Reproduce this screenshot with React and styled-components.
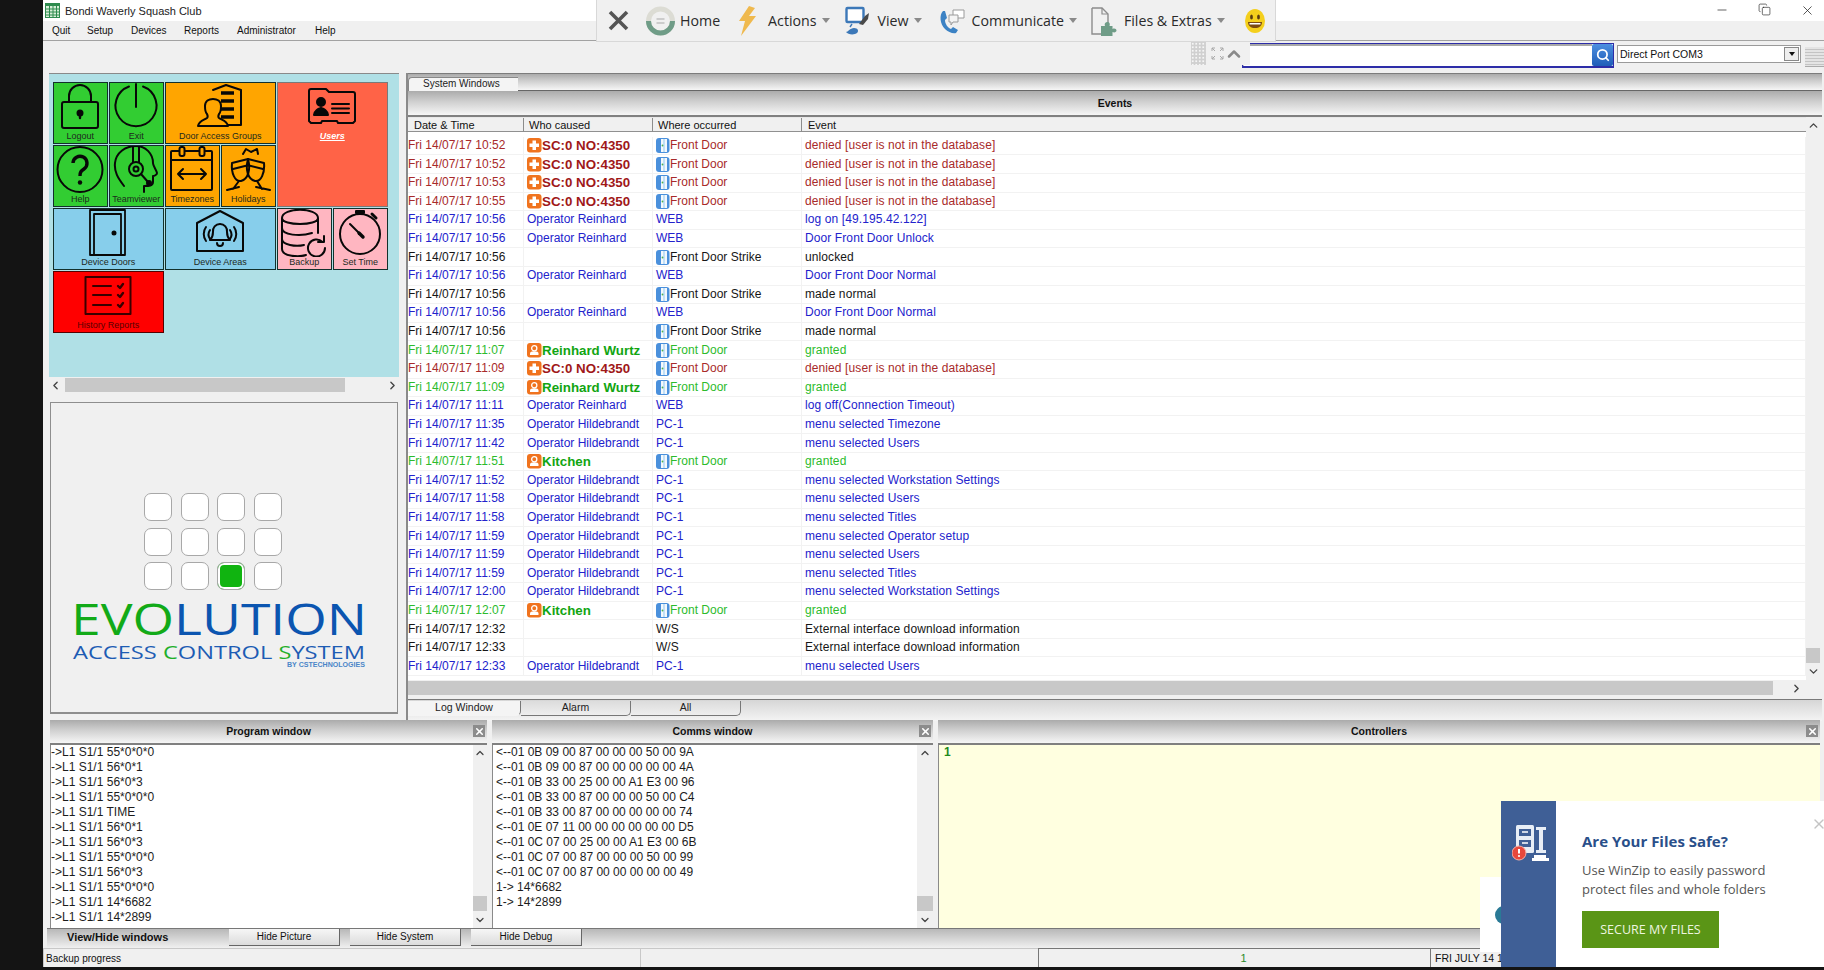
import React from "react";
import styled, { createGlobalStyle } from "styled-components";
import { ChevronUp, ChevronDown, ChevronLeft, ChevronRight, Search, Minus, Copy, X } from "lucide-react";

const barGradient = "linear-gradient(#ababab, #d0d0d0 45%, #f6f6f6)";

const rows = [
  ["denied", "Fri 14/07/17 10:52", "card", "SC:0 NO:4350", "Front Door", "denied [user is not in the database]"],
  ["denied", "Fri 14/07/17 10:52", "card", "SC:0 NO:4350", "Front Door", "denied [user is not in the database]"],
  ["denied", "Fri 14/07/17 10:53", "card", "SC:0 NO:4350", "Front Door", "denied [user is not in the database]"],
  ["denied", "Fri 14/07/17 10:55", "card", "SC:0 NO:4350", "Front Door", "denied [user is not in the database]"],
  ["op", "Fri 14/07/17 10:56", "", "Operator Reinhard", "WEB", "log on [49.195.42.122]"],
  ["op", "Fri 14/07/17 10:56", "", "Operator Reinhard", "WEB", "Door Front Door Unlock"],
  ["plain", "Fri 14/07/17 10:56", "", "", "Front Door Strike", "unlocked"],
  ["op", "Fri 14/07/17 10:56", "", "Operator Reinhard", "WEB", "Door Front Door Normal"],
  ["plain", "Fri 14/07/17 10:56", "", "", "Front Door Strike", "made normal"],
  ["op", "Fri 14/07/17 10:56", "", "Operator Reinhard", "WEB", "Door Front Door Normal"],
  ["plain", "Fri 14/07/17 10:56", "", "", "Front Door Strike", "made normal"],
  ["granted", "Fri 14/07/17 11:07", "user", "Reinhard Wurtz", "Front Door", "granted"],
  ["denied", "Fri 14/07/17 11:09", "card", "SC:0 NO:4350", "Front Door", "denied [user is not in the database]"],
  ["granted", "Fri 14/07/17 11:09", "user", "Reinhard Wurtz", "Front Door", "granted"],
  ["op", "Fri 14/07/17 11:11", "", "Operator Reinhard", "WEB", "log off(Connection Timeout)"],
  ["op", "Fri 14/07/17 11:35", "", "Operator Hildebrandt", "PC-1", "menu selected Timezone"],
  ["op", "Fri 14/07/17 11:42", "", "Operator Hildebrandt", "PC-1", "menu selected Users"],
  ["granted", "Fri 14/07/17 11:51", "user", "Kitchen", "Front Door", "granted"],
  ["op", "Fri 14/07/17 11:52", "", "Operator Hildebrandt", "PC-1", "menu selected Workstation Settings"],
  ["op", "Fri 14/07/17 11:58", "", "Operator Hildebrandt", "PC-1", "menu selected Users"],
  ["op", "Fri 14/07/17 11:58", "", "Operator Hildebrandt", "PC-1", "menu selected Titles"],
  ["op", "Fri 14/07/17 11:59", "", "Operator Hildebrandt", "PC-1", "menu selected Operator setup"],
  ["op", "Fri 14/07/17 11:59", "", "Operator Hildebrandt", "PC-1", "menu selected Users"],
  ["op", "Fri 14/07/17 11:59", "", "Operator Hildebrandt", "PC-1", "menu selected Titles"],
  ["op", "Fri 14/07/17 12:00", "", "Operator Hildebrandt", "PC-1", "menu selected Workstation Settings"],
  ["granted", "Fri 14/07/17 12:07", "user", "Kitchen", "Front Door", "granted"],
  ["plain", "Fri 14/07/17 12:32", "", "", "W/S", "External interface download information"],
  ["plain", "Fri 14/07/17 12:33", "", "", "W/S", "External interface download information"],
  ["op", "Fri 14/07/17 12:33", "", "Operator Hildebrandt", "PC-1", "menu selected Users"],
];

const tones = {
  denied: "#a82a2a",
  op: "#2222cc",
  plain: "#161616",
  granted: "#2cbb2c",
};
const strongTones = { denied: "#a01818", granted: "#12a512" };

const programLines = [
  "->L1 S1/1 55*0*0*0", "->L1 S1/1 56*0*1", "->L1 S1/1 56*0*3", "->L1 S1/1 55*0*0*0",
  "->L1 S1/1 TIME", "->L1 S1/1 56*0*1", "->L1 S1/1 56*0*3", "->L1 S1/1 55*0*0*0",
  "->L1 S1/1 56*0*3", "->L1 S1/1 55*0*0*0", "->L1 S1/1 14*6682", "->L1 S1/1 14*2899",
];

const commsLines = [
  "<--01 0B 09 00 87 00 00 00 50 00 9A", "<--01 0B 09 00 87 00 00 00 00 00 4A",
  "<--01 0B 33 00 25 00 00 A1 E3 00 96", "<--01 0B 33 00 87 00 00 00 50 00 C4",
  "<--01 0B 33 00 87 00 00 00 00 00 74", "<--01 0E 07 11 00 00 00 00 00 00 D5",
  "<--01 0C 07 00 25 00 00 A1 E3 00 6B", "<--01 0C 07 00 87 00 00 00 50 00 99",
  "<--01 0C 07 00 87 00 00 00 00 00 49", "1-> 14*6682", "1-> 14*2899",
];

const GlobalStyle = createGlobalStyle`
  html, body {
    margin: 0;
    height: 970px;
    overflow: hidden;
    background: #141414;
    font-family: "Liberation Sans", Arial, sans-serif;
  }
`;

const Page = styled.div`
  position: relative;
  width: 1824px;
  height: 970px;
  overflow: hidden;
`;

const AppWindow = styled.div`
  display: flex;
  flex-direction: column;
  margin-left: 43px;
  width: 1781px;
  height: 967px;
  background: #f0f0f0;
`;

const TitleBar = styled.div`
  display: flex;
  align-items: center;
  height: 21px;
  background: #fff;
  color: #222;
  font-size: 11px;
  padding-left: 2px;
  gap: 5px;
`;

const WindowButtons = styled.div`
  display: flex;
  margin-left: auto;
  margin-right: 9px;
  gap: 29px;
  color: #222;
`;

const MenuBar = styled.div`
  display: flex;
  align-items: center;
  height: 20px;
  padding-left: 9px;
  box-sizing: border-box;
  border-bottom: 1px solid #a2a2a2;
  font-size: 10px;
  color: #111;
`;

const MenuItem = styled.span`
  width: ${(p) => p.$w}px;
`;

const ToolRow = styled.div`
  display: flex;
  justify-content: flex-end;
  align-items: flex-start;
  height: 32px;
  box-sizing: border-box;
  padding-top: 2px;
`;

const SearchBox = styled.div`
  display: flex;
  width: 372px;
  height: 25px;
  box-sizing: border-box;
  border: 1px solid #2d2da8;
  border-bottom-width: 2px;
  background: #fff;
`;

const SearchField = styled.div`
  flex: 1;
  border-top: 2px solid #a8a8a8;
  border-left: 1px solid #c8c8c8;
`;

const SearchButton = styled.div`
  display: flex;
  align-items: center;
  justify-content: center;
  width: 21px;
  background: linear-gradient(#4d8fe0, #1f5db8);
  border-radius: 2px;
  color: #fff;
`;

const Combo = styled.div`
  display: flex;
  align-items: center;
  justify-content: space-between;
  width: 184px;
  height: 18px;
  box-sizing: border-box;
  margin: 2px 0 0 3px;
  padding: 0 1px 0 2px;
  background: #fff;
  border: 1px solid #9a9a9a;
  font-size: 10.5px;
  color: #111;
`;

const ComboArrow = styled.span`
  display: flex;
  align-items: center;
  justify-content: center;
  width: 15px;
  height: 14px;
  background: #eee;
  border: 1px solid #888;
  box-sizing: border-box;
  &::after {
    content: "";
    border-left: 3px solid transparent;
    border-right: 3px solid transparent;
    border-top: 4px solid #111;
  }
`;

const DocButton = styled.div`
  width: 19px;
  height: 19px;
  margin: 4px 0 0 4px;
  background: repeating-linear-gradient(#e4e4e4 0 2px, #c4c4c4 2px 3px);
  border-bottom: 1px solid #aaa;
`;

const Upper = styled.div`
  display: flex;
  height: 647px;
`;

const LeftColumn = styled.div`
  display: flex;
  flex-direction: column;
  width: 363px;
  flex: none;
  padding-left: 6px;
  box-sizing: border-box;
`;

const TilePanel = styled.div`
  height: 304px;
  width: 350px;
  box-sizing: border-box;
  padding: 8px 0 0 4px;
  background: #b0e0e6;
  border-top: 1px solid #8a8a8a;
`;

const TileGrid = styled.div`
  display: grid;
  grid-template-columns: repeat(6, 54.5px);
  grid-auto-rows: 61.5px;
  gap: 1.5px;
`;

const tileColors = {
  green: "#32cd32",
  orange: "#ffa500",
  tomato: "#ff6347",
  sky: "#87ceeb",
  pink: "#ffb6c1",
  red: "#ff0000",
};

const Tile = styled.div`
  display: flex;
  flex-direction: column;
  align-items: center;
  grid-column: span ${(p) => p.$cols || 1};
  grid-row: span ${(p) => p.$rows || 1};
  box-sizing: border-box;
  overflow: hidden;
  background: ${(p) => tileColors[p.$color]};
  border: 1px solid ${(p) => (p.$color === "tomato" ? "#7a7a7a" : p.$color === "red" ? "#500" : "#12302c")};
  svg {
    flex: none;
    color: ${(p) => (p.$color === "red" ? "#3a0000" : "#080808")};
  }
`;

const TileLabel = styled.span`
  font-size: 9px;
  line-height: 11px;
  white-space: nowrap;
  color: ${(p) => (p.$color === "red" ? "#5a0000" : "#1d2a1d")};
`;

const UsersLabel = styled(TileLabel)`
  font-weight: bold;
  font-style: italic;
  text-decoration: underline;
  color: #fff;
`;

const HScroll = styled.div`
  display: flex;
  align-items: center;
  justify-content: space-between;
  width: ${(p) => p.$w}px;
  height: 14px;
  flex: none;
  background: #f0f0f0;
  color: #444;
  margin: 1px 0 0;
`;

const HTrack = styled.div`
  flex: 1;
  height: 14px;
  margin: 0 ${(p) => p.$gap}px 0 ${(p) => p.$start || 0}px;
  background: #c8c8c8;
`;

const PicturePanel = styled.div`
  display: flex;
  flex-direction: column;
  align-items: center;
  width: 348px;
  height: 312px;
  box-sizing: border-box;
  margin: 10px 0 0 1px;
  padding-top: 90px;
  border: 1px solid #8e8e8e;
  border-bottom-width: 2px;
`;

const KeyGrid = styled.div`
  display: grid;
  grid-template-columns: repeat(4, 28px);
  grid-auto-rows: 28px;
  gap: 6.5px 8.5px;
  margin-right: 22px;
`;

const Key = styled.div`
  box-sizing: border-box;
  border: 1.5px solid #a8a8a8;
  border-radius: 7px;
  background: ${(p) => (p.$on ? "#10b410" : "#fff")};
  box-shadow: ${(p) => (p.$on ? "inset 0 0 0 2px #fff" : "none")};
`;

const LogoSvg = styled.svg`
  display: block;
  margin: -5px 0 0 -10px;
`;

const MainPanel = styled.div`
  display: flex;
  flex-direction: column;
  width: 1416px;
  border-left: 2px solid #8a8a8a;
  box-sizing: border-box;
`;

const TabStrip = styled.div`
  display: flex;
  height: 18px;
  flex: none;
  padding-top: 3px;
  box-sizing: border-box;
  background: ${barGradient};
  border-top: 1px solid #7c7c7c;
  border-bottom: 1px solid #666;
`;

const TopTab = styled.div`
  width: 110px;
  height: 15px;
  box-sizing: border-box;
  padding-left: 14px;
  background: #f4f4f4;
  border-left: 1px solid #888;
  border-top: 1px solid #888;
  border-top-left-radius: 4px;
  font-size: 10px;
  line-height: 12px;
  color: #222;
`;

const SectionHeader = styled.div`
  position: relative;
  display: flex;
  align-items: center;
  justify-content: center;
  height: ${(p) => p.$h}px;
  flex: none;
  box-sizing: border-box;
  padding-bottom: ${(p) => p.$lift || 0}px;
  background: ${barGradient};
  border-bottom: 2px solid #808080;
  font-size: 10.5px;
  font-weight: bold;
  color: #111;
`;

const CloseBox = styled.span`
  position: absolute;
  right: 2px;
  top: 5px;
  display: flex;
  align-items: center;
  justify-content: center;
  width: 12px;
  height: 12px;
  background: #8c8c8c;
  color: #fff;
`;

const TableArea = styled.div`
  display: flex;
  height: 563px;
  flex: none;
  background: #fff;
  margin-right: 2px;
`;

const Table = styled.div`
  flex: 1;
  min-width: 0;
`;

const gridColumns = "116px 129px 149px 1fr";

const ColumnHeader = styled.div`
  display: grid;
  grid-template-columns: ${gridColumns};
  height: 15px;
  background: #f0f0f0;
  border-bottom: 1px solid #909090;
  border-top: 1px solid #e8e8e8;
  box-sizing: border-box;
  font-size: 11px;
  line-height: 14px;
  color: #111;
`;

const HeaderCell = styled.div`
  padding-left: ${(p) => p.$pad}px;
  border-right: 1px solid #8c8c8c;
  &:last-child {
    border-right: 0;
  }
`;

const RowList = styled.div`
  padding-top: 4.8px;
`;

const Row = styled.div`
  display: grid;
  grid-template-columns: ${gridColumns};
  height: 18.6px;
  box-sizing: border-box;
  border-bottom: 1px solid #f2f2f2;
  font-size: 12px;
  line-height: 17px;
  white-space: nowrap;
  color: ${(p) => tones[p.$tone]};
`;

const Cell = styled.div`
  display: flex;
  align-items: center;
  padding-left: ${(p) => p.$pad || 0}px;
  border-right: 1px solid #f2f2f2;
  overflow: hidden;
`;

const EventCell = styled(Cell)`
  letter-spacing: 0.1px;
`;

const WhoName = styled.span`
  font-size: 13.33px;
  font-weight: bold;
  color: ${(p) => strongTones[p.$tone]};
`;

const VScroll = styled.div`
  display: flex;
  flex-direction: column;
  align-items: center;
  width: ${(p) => p.$w}px;
  flex: none;
  background: #f0f0f0;
  color: #444;
  padding: 2px 0;
  box-sizing: border-box;
`;

const VTrack = styled.div`
  flex: 1;
  display: flex;
  align-items: flex-end;
  width: 100%;
  padding-bottom: ${(p) => p.$bottom}px;
`;

const VThumb = styled.div`
  width: 100%;
  height: 15px;
  background: #c8c8c8;
`;

const BottomTabs = styled.div`
  display: flex;
  height: 22px;
  flex: none;
  box-sizing: border-box;
  margin-top: 4px;
  padding-top: 1px;
  border-top: 1px solid #7a7a7a;
  background: linear-gradient(#d6d6d6, #f4f4f4);
`;

const LogTab = styled.div`
  width: ${(p) => p.$w}px;
  height: 15px;
  box-sizing: border-box;
  text-align: center;
  font-size: 10.5px;
  line-height: 13px;
  color: #222;
  background: ${(p) => (p.$active ? "#f4f4f4" : "linear-gradient(#dcdcdc, #eee)")};
  border-bottom: 1px solid ${(p) => (p.$active ? "#f4f4f4" : "#777")};
  border-right: 1px solid #777;
  border-bottom-right-radius: 5px;
`;

const Lower = styled.div`
  display: flex;
  height: 208px;
  flex: none;
  padding-left: 7px;
  gap: 5px;
`;

const DebugPanel = styled.div`
  display: flex;
  flex-direction: column;
  width: ${(p) => p.$w}px;
  flex: none;
`;

const DebugBody = styled.div`
  display: flex;
  height: 183px;
  background: ${(p) => p.$bg || "#fff"};
  border-left: 1px solid #8a8a8a;
`;

const LogLines = styled.div`
  flex: 1;
  padding-left: ${(p) => p.$pad}px;
  font-size: 12px;
  line-height: 15px;
  color: #1c1c1c;
  white-space: nowrap;
`;

const ControllerText = styled.div`
  padding-left: 5px;
  font-size: 12px;
  font-weight: bold;
  line-height: 14px;
  color: #1d8a1d;
`;

const ViewBar = styled.div`
  display: flex;
  align-items: flex-start;
  gap: 10px;
  height: 20px;
  flex: none;
  margin-left: 4px;
  background: linear-gradient(#b8b8b8, #f0f0f0);
  border-top: 1px solid #777;
  box-sizing: border-box;
`;

const ViewLabel = styled.div`
  width: 172px;
  padding-left: 20px;
  box-sizing: border-box;
  font-size: 11px;
  font-weight: bold;
  line-height: 16px;
  color: #111;
`;

const ViewButton = styled.div`
  width: 111px;
  height: 17px;
  box-sizing: border-box;
  text-align: center;
  font-size: 10px;
  line-height: 15px;
  color: #111;
  background: linear-gradient(#f6f6f6, #dcdcdc);
  border-right: 1px solid #666;
  border-bottom: 1px solid #666;
`;

const StatusBar = styled.div`
  display: flex;
  height: 19px;
  flex: none;
  font-size: 10px;
  color: #111;
`;

const StatusCell = styled.div`
  width: ${(p) => p.$w}px;
  flex: none;
  box-sizing: border-box;
  padding-left: ${(p) => p.$pad || 0}px;
  line-height: 19px;
  font-size: ${(p) => p.$size || 10}px;
  text-align: ${(p) => (p.$center ? "center" : "left")};
  color: ${(p) => p.$color || "#111"};
  border-left: 1px solid ${(p) => (p.$sunken ? "#777" : "#c8c8c8")};
  border-top: 1px solid ${(p) => (p.$sunken ? "#777" : "#c8c8c8")};
  white-space: nowrap;
  overflow: hidden;
`;

const RemoteBar = styled.div`
  position: absolute;
  left: 596px;
  top: 0;
  display: flex;
  align-items: center;
  width: 680px;
  height: 42px;
  box-sizing: border-box;
  padding-left: 11px;
  background: #f0f0f0;
  border: 1px solid #d8d8d8;
  border-top: 0;
  font-family: "Open Sans", sans-serif;
  font-size: 14.2px;
  color: #2a2a2a;
  svg {
    flex: none;
  }
`;

const RemoteItem = styled.div`
  display: flex;
  align-items: center;
  flex: none;
  gap: ${(p) => p.$gap}px;
  margin-left: ${(p) => p.$left}px;
  white-space: nowrap;
`;

const RemoteLabel = styled.span`
  display: flex;
  align-items: center;
  gap: 5px;
`;

const Caret = styled.span`
  border-left: 4px solid transparent;
  border-right: 4px solid transparent;
  border-top: 5px solid #8a8a8a;
`;

const Handle = styled.div`
  position: absolute;
  left: 1191px;
  top: 42px;
  display: flex;
  align-items: center;
  width: 59px;
  height: 23px;
  background: #f0f0f0;
`;

const Grip = styled.div`
  width: 15px;
  height: 100%;
  margin-right: 5px;
  background:
    radial-gradient(circle, #f6f6f6 1px, transparent 1.2px) 0 0 / 3.5px 3.5px,
    #d0d0d0;
`;

const Promo = styled.div`
  position: absolute;
  left: 1501px;
  top: 801px;
  display: flex;
  width: 323px;
  height: 166px;
  background: #fff;
`;

const PromoSide = styled.div`
  width: 55px;
  flex: none;
  box-sizing: border-box;
  padding: 22px 0 0 11px;
  background: #3f5f96;
`;

const PromoBody = styled.div`
  position: relative;
  flex: 1;
  padding: 30px 0 0 26px;
`;

const PromoClose = styled.span`
  position: absolute;
  right: -3px;
  top: 15px;
  color: #c4c4c4;
`;

const PromoTitle = styled.div`
  font-family: "Open Sans", sans-serif;
  font-size: 15px;
  font-weight: 700;
  line-height: 20px;
  color: #2a4f8a;
`;

const PromoText = styled.div`
  margin-top: 10px;
  font-family: "Open Sans", sans-serif;
  font-size: 13px;
  line-height: 19px;
  color: #555;
`;

const PromoButton = styled.div`
  width: 137px;
  height: 37px;
  margin-top: 12px;
  text-align: center;
  font-family: "Open Sans", sans-serif;
  font-size: 12.5px;
  line-height: 37px;
  color: #eef6e0;
  background: #5a9516;
`;

const PeekCard = styled.div`
  position: absolute;
  left: 1480px;
  top: 877px;
  display: flex;
  align-items: center;
  width: 21px;
  height: 75px;
  padding-left: 15px;
  box-sizing: border-box;
  overflow: hidden;
  background: #fff;
`;

const PeekDot = styled.div`
  width: 18px;
  height: 18px;
  flex: none;
  border-radius: 50%;
  background: #2a7a96;
`;

const Ic = ({ children, sw = 2 }) => (
  <svg width={48} height={48} viewBox="0 0 48 48" fill="none" stroke="currentColor" strokeWidth={sw} strokeLinecap="round" strokeLinejoin="round">
    {children}
  </svg>
);

const tileIcons = {
  lock: (
    <Ic>
      <rect x="6" y="19" width="36" height="26" rx="2" />
      <path d="M13 19v-6a11 11 0 0 1 22 0v6" />
      <circle cx="24" cy="30" r="2.5" fill="currentColor" />
      <path d="M24 30v5" strokeWidth="2.4" />
    </Ic>
  ),
  power: (
    <Ic>
      <path d="M17 3.5A20.5 20.5 0 1 0 31 3.5" />
      <path d="M24 1v23" />
    </Ic>
  ),
  groups: (
    <Ic>
      <path d="M17 7l13-5 15 5v35H24" />
      <path d="M25 10h13M25 18h13M25 26h13M25 34h13" strokeWidth="3.6" strokeLinecap="butt" />
      <path d="M2 43c1-5 6-6 9-8 1-1 1-2 0-4-2-2-2-6-2-8 0-5 4-7 8-7s8 2 8 7c0 2 0 6-2 8-1 2-1 3 0 4 3 2 8 3 9 8z" fill="#ffa500" />
    </Ic>
  ),
  card: (
    <Ic>
      <path d="M1 8a2 2 0 0 1 2-2h15l3 3h24a2 2 0 0 1 2 2v27l-2 2H30l-1-2H14l-1 2H3l-2-2z" />
      <circle cx="13" cy="19" r="4" fill="currentColor" />
      <path d="M6 32c1-5 4-6 7-7 3 1 6 2 7 7z" fill="currentColor" />
      <path d="M24 21h17M24 25.5h17M24 30h17" />
    </Ic>
  ),
  help: (
    <Ic>
      <circle cx="24" cy="23.5" r="22.5" />
      <path d="M17 17a7 7 0 1 1 11 6c-3 2-4 3-4 7" strokeWidth="3.4" strokeLinecap="butt" />
      <circle cx="24" cy="36.5" r="2.2" fill="currentColor" stroke="none" />
    </Ic>
  ),
  agent: (
    <Ic>
      <path d="M12 40C6 32 2 26 3 17 4 7 13 0 24 0c10 0 17 8 17 17 0 3 4 8 4 10s-3 3-4 3v6c0 4-4 4-9 4v6" />
      <path d="M21 0v16M27 0v16" />
      <circle cx="24" cy="23" r="7" />
      <circle cx="24" cy="23" r="2.5" />
      <path d="M29 28l7 8" />
      <circle cx="37" cy="37" r="2" fill="currentColor" />
    </Ic>
  ),
  calendar: (
    <Ic>
      <rect x="3" y="5" width="41" height="39" rx="1" />
      <path d="M3 14h41" />
      <rect x="11.5" y="1" width="5" height="9" rx="2" fill="#ffa500" />
      <rect x="31.5" y="1" width="5" height="9" rx="2" fill="#ffa500" />
      <path d="M10 28h28M15 23l-5 5 5 5M33 23l5 5-5 5" />
    </Ic>
  ),
  glasses: (
    <Ic>
      <path d="M8 17l16-4c3 11 0 20-7 22-6 1-10-8-9-18z" />
      <path d="M24 13l16 4c1 10-3 19-9 18-7-2-10-11-7-22z" />
      <path d="M9 23l16-4M23 19l16 4" />
      <path d="M15 35l-6 8M3 44l12-3M33 35l5 8M32 41l14 3" />
      <path d="M19 8l3-5 5 3 6-3 1 5" />
    </Ic>
  ),
  door: (
    <Ic sw={1.8}>
      <path d="M6 46V1h35v45zM10 46V5h27v41" />
      <circle cx="30" cy="24" r="1.6" fill="currentColor" />
    </Ic>
  ),
  area: (
    <Ic>
      <path d="M1 42V14L24 2l23 12v28z" />
      <path d="M24 15a7 7 0 0 0-7 8c0 4-1 6-3 8h20c-2-2-3-4-3-8a7 7 0 0 0-7-8z" />
      <path d="M21 34a3 3 0 0 0 6 0" />
      <path d="M10 18c-3 4-3 10 0 14M14 21c-2 3-2 6 0 9M38 18c3 4 3 10 0 14M34 21c2 3 2 6 0 9" />
    </Ic>
  ),
  database: (
    <Ic>
      <path d="M2 9c0-11 36-11 36 0v15M2 9c0 8 36 8 36 0M2 9v31c0 8 18 8 24 6M2 19c0 7 18 9 30 5M2 30c0 6 14 8 22 6" />
      <path d="M45 39a8.5 8.5 0 1 1-2.5-6" />
      <path d="M44 27v6h-6" />
    </Ic>
  ),
  stopwatch: (
    <Ic>
      <circle cx="24" cy="25" r="20" />
      <path d="M20 2h8v2h-8z" fill="currentColor" />
      <path d="M36 5l4 4" strokeWidth="3" />
      <path d="M14 15l13 13" />
      <path d="M23 24l4 4" strokeWidth="3.4" />
    </Ic>
  ),
  checklist: (
    <Ic>
      <rect x="1.5" y="5" width="45" height="37" />
      <path d="M9 14h18M9 23h18M9 33h18" />
      <path d="M34 14l2 2 3-4M34 23l2 2 3-4M34 33l2 2 3-4" strokeWidth="2.4" />
    </Ic>
  ),
};

const tiles = [
  { icon: "lock", label: "Logout", color: "green" },
  { icon: "power", label: "Exit", color: "green" },
  { icon: "groups", label: "Door Access Groups", color: "orange", cols: 2 },
  { icon: "card", label: "Users", color: "tomato", cols: 2, rows: 2 },
  { icon: "help", label: "Help", color: "green" },
  { icon: "agent", label: "Teamviewer", color: "green" },
  { icon: "calendar", label: "Timezones", color: "orange" },
  { icon: "glasses", label: "Holidays", color: "orange" },
  { icon: "door", label: "Device Doors", color: "sky", cols: 2 },
  { icon: "area", label: "Device Areas", color: "sky", cols: 2 },
  { icon: "database", label: "Backup", color: "pink" },
  { icon: "stopwatch", label: "Set Time", color: "pink" },
  { icon: "checklist", label: "History Reports", color: "red", cols: 2 },
];

const AppIcon = () => (
  <svg width="15" height="15" viewBox="0 0 15 15">
    <rect width="15" height="15" fill="#2e8b4e" />
    <path d="M1 3h13v11H1z" fill="#d8efd8" />
    <path d="M1 6h13M1 9h13M1 12h13M4.5 3v11M8 3v11M11.5 3v11" stroke="#2e8b4e" strokeWidth="1" />
  </svg>
);

const CardBadge = () => (
  <svg width="15" height="15" viewBox="0 0 15 15" style={{ flex: "none" }}>
    <rect width="14.5" height="14.5" rx="3" fill="#f0731e" />
    <path d="M5.5 2.5h3.5v3h3v3.5h-3v3H5.5v-3h-3V5.5h3z" fill="#fff" />
  </svg>
);

const UserBadge = () => (
  <svg width="15" height="15" viewBox="0 0 15 15" style={{ flex: "none" }}>
    <rect width="14.5" height="14.5" rx="3" fill="#f0731e" />
    <circle cx="7.25" cy="5.3" r="2.6" fill="none" stroke="#fff" strokeWidth="1.3" />
    <path d="M3 12v-1.5c0-1.5 1.5-2.3 4.25-2.3s4.25.8 4.25 2.3V12z" fill="#fff" />
  </svg>
);

const DoorBadge = () => (
  <svg width="14" height="15" viewBox="0 0 14 15" style={{ flex: "none" }}>
    <rect width="13.5" height="15" rx="3" fill="#4a90dc" />
    <rect x="5" y="1" width="6" height="13" fill="#f4f8fc" />
    <path d="M8 1v13" stroke="#8fc7f0" />
    <circle cx="6.5" cy="7.5" r="0.9" fill="#4fb04f" />
  </svg>
);

const HomeIcon = () => (
  <svg width="29" height="30" viewBox="0 0 29 30">
    <circle cx="14.5" cy="15" r="12" fill="none" stroke="#dcdcd4" strokeWidth="5" />
    <path d="M2.5 15a12 12 0 0 0 24 0" fill="none" stroke="#6f9c87" strokeWidth="5" />
    <path d="M10.5 13h8M10.5 17h8" stroke="#c0c0c0" strokeWidth="1.4" />
  </svg>
);

const BoltIcon = () => (
  <svg width="19" height="30" viewBox="0 0 19 30">
    <path d="M11 0L1 15h6L3 30 18 10h-7l6-8z" fill="#efb94e" />
  </svg>
);

const ViewIcon = () => (
  <svg width="25" height="30" viewBox="0 0 25 30">
    <rect x="1.5" y="2" width="17" height="14" rx="1" fill="#fff" stroke="#3c78b8" strokeWidth="2.4" />
    <path d="M7 18l-2 3" stroke="#3c78b8" strokeWidth="1.4" />
    <path d="M1 26c2 0 4-4 8-4s5 3 3 5-9 2-11-1z" fill="#3c78b8" />
    <path d="M14 18l6-8 4-3-1 6-5 6z" fill="#4a4a4a" />
  </svg>
);

const CommIcon = () => (
  <svg width="28" height="30" viewBox="0 0 28 30">
    <path d="M5 5C1 9 2 18 7 23c3 3 8 5 11 4l2-3-5-3-2 2c-3-1-6-5-6-9l2-2-2-7z" fill="#3c82c4" />
    <path d="M15 4h11v8h-6l-3 3v-3h-2z" fill="#fff" stroke="#9a9a9a" />
    <path d="M11 9h9v7h-5l-2 3v-3h-2z" fill="#f4f4f4" stroke="#9a9a9a" />
  </svg>
);

const FileIcon = () => (
  <svg width="28" height="30" viewBox="0 0 28 30">
    <path d="M2 2h10l6 6v9M2 2v26h9" fill="none" stroke="#8c8c8c" strokeWidth="1.4" />
    <path d="M12 2v6h6" fill="none" stroke="#8c8c8c" strokeWidth="1.2" />
    <path d="M11 20h4c-1-3 1-4 2.5-4s3 1 2 4h3v3c2-1 4 0 4 1.5s-2 2.5-4 1.5v4H11z" fill="#6f9c87" />
  </svg>
);

const SmileIcon = () => (
  <svg width="20" height="24" viewBox="0 0 20 24">
    <ellipse cx="10" cy="12" rx="10" ry="12" fill="#f4cf1c" />
    <ellipse cx="6.5" cy="8" rx="1.4" ry="2.6" fill="#5a3c10" />
    <ellipse cx="13.5" cy="8" rx="1.4" ry="2.6" fill="#5a3c10" />
    <path d="M3 13h14c0 4-3 6-7 6s-7-2-7-6z" fill="#7a4a10" />
    <path d="M4.5 14h11v1.5h-11z" fill="#fff" />
  </svg>
);

const CloseIcon = () => (
  <svg width="21" height="21" viewBox="0 0 21 21">
    <path d="M2 2l17 17M19 2L2 19" stroke="#555" strokeWidth="3.6" />
  </svg>
);

const SecureIcon = () => (
  <svg width="38" height="40" viewBox="0 0 38 40">
    <rect x="4" y="2" width="18" height="28" rx="1.5" fill="#e8eef6" />
    <path d="M7 6h12v7H7zM7 17h12v7H7z" fill="#3f5f96" />
    <path d="M10 9h6M10 20h6" stroke="#fff" strokeWidth="1.4" />
    <path d="M24 4h10v3h-3v20h3v3H24v-3h3V7h-3z" fill="#e8eef6" />
    <path d="M22 32h12v3h3v3H20v-3h2z" fill="#fff" />
    <circle cx="7" cy="30" r="7" fill="#e8483c" stroke="#f6b0a8" />
    <path d="M7 26v4.5" stroke="#fff" strokeWidth="2" />
    <circle cx="7" cy="33" r="1.1" fill="#fff" />
  </svg>
);

const ExpandIcon = () => (
  <svg width="13" height="13" viewBox="0 0 13 13" fill="none" stroke="#a8a8a8" strokeWidth="1">
    <path d="M1 4V1h3M9 1h3v3M12 9v3H9M4 12H1V9M1 1l3 3M12 1L9 4M12 12L9 9M1 12l3-3" />
  </svg>
);

function EventRow({ row }) {
  const [tone, date, badge, who, where, event] = row;
  const hasDoor = where.startsWith("Front");
  return (
    <Row $tone={tone}>
      <Cell>{date}</Cell>
      <Cell $pad={3}>
        {badge === "card" && <CardBadge />}
        {badge === "user" && <UserBadge />}
        {badge ? <WhoName $tone={tone}>{who}</WhoName> : who}
      </Cell>
      <Cell $pad={3}>
        {hasDoor && <DoorBadge />}
        {where}
      </Cell>
      <EventCell $pad={3}>{event}</EventCell>
    </Row>
  );
}

function DebugWindow({ title, width, bg, children }) {
  return (
    <DebugPanel $w={width}>
      <SectionHeader $h={25} $lift={2}>
        {title}
        <CloseBox>
          <X size={11} strokeWidth={3.5} />
        </CloseBox>
      </SectionHeader>
      <DebugBody $bg={bg}>{children}</DebugBody>
    </DebugPanel>
  );
}

function DebugScroll({ width }) {
  return (
    <VScroll $w={width}>
      <ChevronUp size={12} strokeWidth={2.5} />
      <VTrack $bottom={3}>
        <VThumb />
      </VTrack>
      <ChevronDown size={12} strokeWidth={2.5} />
    </VScroll>
  );
}

function RemoteToolbar() {
  return (
    <RemoteBar>
      <CloseIcon />
      <RemoteItem $left={17} $gap={5}>
        <HomeIcon />
        Home
      </RemoteItem>
      <RemoteItem $left={18} $gap={11}>
        <BoltIcon />
        <RemoteLabel>
          Actions
          <Caret />
        </RemoteLabel>
      </RemoteItem>
      <RemoteItem $left={15} $gap={8}>
        <ViewIcon />
        <RemoteLabel>
          View
          <Caret />
        </RemoteLabel>
      </RemoteItem>
      <RemoteItem $left={16} $gap={6}>
        <CommIcon />
        <RemoteLabel>
          Communicate
          <Caret />
        </RemoteLabel>
      </RemoteItem>
      <RemoteItem $left={13} $gap={6}>
        <FileIcon />
        <RemoteLabel>
          Files &amp; Extras
          <Caret />
        </RemoteLabel>
      </RemoteItem>
      <RemoteItem $left={20} $gap={0}>
        <SmileIcon />
      </RemoteItem>
    </RemoteBar>
  );
}

export default function App() {
  return (
    <Page>
      <GlobalStyle />
      <AppWindow>
        <TitleBar>
          <AppIcon />
          Bondi Waverly Squash Club
          <WindowButtons>
            <Minus size={14} strokeWidth={1.2} />
            <Copy size={13} strokeWidth={1.2} />
            <X size={15} strokeWidth={1.2} />
          </WindowButtons>
        </TitleBar>
        <MenuBar>
          <MenuItem $w={35}>Quit</MenuItem>
          <MenuItem $w={44}>Setup</MenuItem>
          <MenuItem $w={53}>Devices</MenuItem>
          <MenuItem $w={53}>Reports</MenuItem>
          <MenuItem $w={78}>Administrator</MenuItem>
          <MenuItem $w={30}>Help</MenuItem>
        </MenuBar>
        <ToolRow>
          <SearchBox>
            <SearchField />
            <SearchButton>
              <Search size={14} strokeWidth={3} />
            </SearchButton>
          </SearchBox>
          <Combo>
            Direct Port COM3
            <ComboArrow />
          </Combo>
          <DocButton />
        </ToolRow>
        <Upper>
          <LeftColumn>
            <TilePanel>
              <TileGrid>
                {tiles.map((t) => (
                  <Tile key={t.label} $color={t.color} $cols={t.cols} $rows={t.rows}>
                    {tileIcons[t.icon]}
                    {t.label === "Users" ? (
                      <UsersLabel $color={t.color}>{t.label}</UsersLabel>
                    ) : (
                      <TileLabel $color={t.color}>{t.label}</TileLabel>
                    )}
                  </Tile>
                ))}
              </TileGrid>
            </TilePanel>
            <HScroll $w={350}>
              <ChevronLeft size={13} strokeWidth={2.5} />
              <HTrack $start={3} $gap={41} />
              <ChevronRight size={13} strokeWidth={2.5} />
            </HScroll>
            <PicturePanel>
              <KeyGrid>
                {Array.from({ length: 12 }, (_, i) => (
                  <Key key={i} $on={i === 10} />
                ))}
              </KeyGrid>
              <LogoSvg width="300" height="84" viewBox="0 0 300 84">
                <text x="2" y="50" fontFamily="Open Sans, sans-serif" fontSize="43" textLength="296" lengthAdjust="spacingAndGlyphs">
                  <tspan fill="#12aa18">EVO</tspan>
                  <tspan fill="#0b55b0">LUTION</tspan>
                </text>
                <text x="4" y="74" fontFamily="Open Sans, sans-serif" fontSize="18" textLength="292" lengthAdjust="spacingAndGlyphs" fill="#1d5cb4">
                  ACCESS <tspan fill="#1faf2a">C</tspan>ONTROL <tspan fill="#1faf2a">S</tspan>YSTEM
                </text>
                <text x="218" y="82" fontFamily="Liberation Sans, sans-serif" fontSize="6.5" fontWeight="bold" textLength="78" lengthAdjust="spacingAndGlyphs" fill="#4a86c8">
                  BY CSTECHNOLOGIES
                </text>
              </LogoSvg>
            </PicturePanel>
          </LeftColumn>
          <MainPanel>
            <TabStrip>
              <TopTab>System Windows</TopTab>
            </TabStrip>
            <SectionHeader $h={26}>Events</SectionHeader>
            <TableArea>
              <Table>
                <ColumnHeader>
                  <HeaderCell $pad={6}>Date &amp; Time</HeaderCell>
                  <HeaderCell $pad={5}>Who caused</HeaderCell>
                  <HeaderCell $pad={5}>Where occurred</HeaderCell>
                  <HeaderCell $pad={6}>Event</HeaderCell>
                </ColumnHeader>
                <RowList>
                  {rows.map((r, i) => (
                    <EventRow key={i} row={r} />
                  ))}
                </RowList>
              </Table>
              <VScroll $w={14}>
                <ChevronUp size={13} strokeWidth={2.5} />
                <VTrack $bottom={2}>
                  <VThumb />
                </VTrack>
                <ChevronDown size={13} strokeWidth={2.5} />
              </VScroll>
            </TableArea>
            <HScroll $w={1414}>
              <HTrack $gap={17} />
              <ChevronRight size={13} strokeWidth={2.5} style={{ marginRight: 19 }} />
            </HScroll>
            <BottomTabs>
              <LogTab $w={113} $active>Log Window</LogTab>
              <LogTab $w={110}>Alarm</LogTab>
              <LogTab $w={110}>All</LogTab>
            </BottomTabs>
          </MainPanel>
        </Upper>
        <Lower>
          <DebugWindow title="Program window" width={437}>
            <LogLines $pad={0}>
              {programLines.map((l, i) => (
                <div key={i}>{l}</div>
              ))}
            </LogLines>
            <DebugScroll width={14} />
          </DebugWindow>
          <DebugWindow title="Comms window" width={441}>
            <LogLines $pad={3}>
              {commsLines.map((l, i) => (
                <div key={i}>{l}</div>
              ))}
            </LogLines>
            <DebugScroll width={16} />
          </DebugWindow>
          <DebugWindow title="Controllers" width={882} bg="#ffffe0">
            <ControllerText>1</ControllerText>
          </DebugWindow>
        </Lower>
        <ViewBar>
          <ViewLabel>View/Hide windows</ViewLabel>
          <ViewButton>Hide Picture</ViewButton>
          <ViewButton>Hide System</ViewButton>
          <ViewButton>Hide Debug</ViewButton>
        </ViewBar>
        <StatusBar>
          <StatusCell $w={597} $pad={2}>Backup progress</StatusCell>
          <StatusCell $w={398} />
          <StatusCell $w={392} $center $pad={18} $sunken $size={11} $color="#2a8a2a">1</StatusCell>
          <StatusCell $w={389} $pad={4} $sunken $size={10.5}>FRI JULY 14 12:35</StatusCell>
        </StatusBar>
      </AppWindow>
      <RemoteToolbar />
      <Handle>
        <Grip />
        <ExpandIcon />
        <ChevronUp size={20} strokeWidth={3} color="#8a8a8a" />
      </Handle>
      <PeekCard>
        <PeekDot />
      </PeekCard>
      <Promo>
        <PromoSide>
          <SecureIcon />
        </PromoSide>
        <PromoBody>
          <PromoClose>
            <X size={16} strokeWidth={2} />
          </PromoClose>
          <PromoTitle>Are Your Files Safe?</PromoTitle>
          <PromoText>
            Use WinZip to easily password
            <br />
            protect files and whole folders
          </PromoText>
          <PromoButton>SECURE MY FILES</PromoButton>
        </PromoBody>
      </Promo>
    </Page>
  );
}
